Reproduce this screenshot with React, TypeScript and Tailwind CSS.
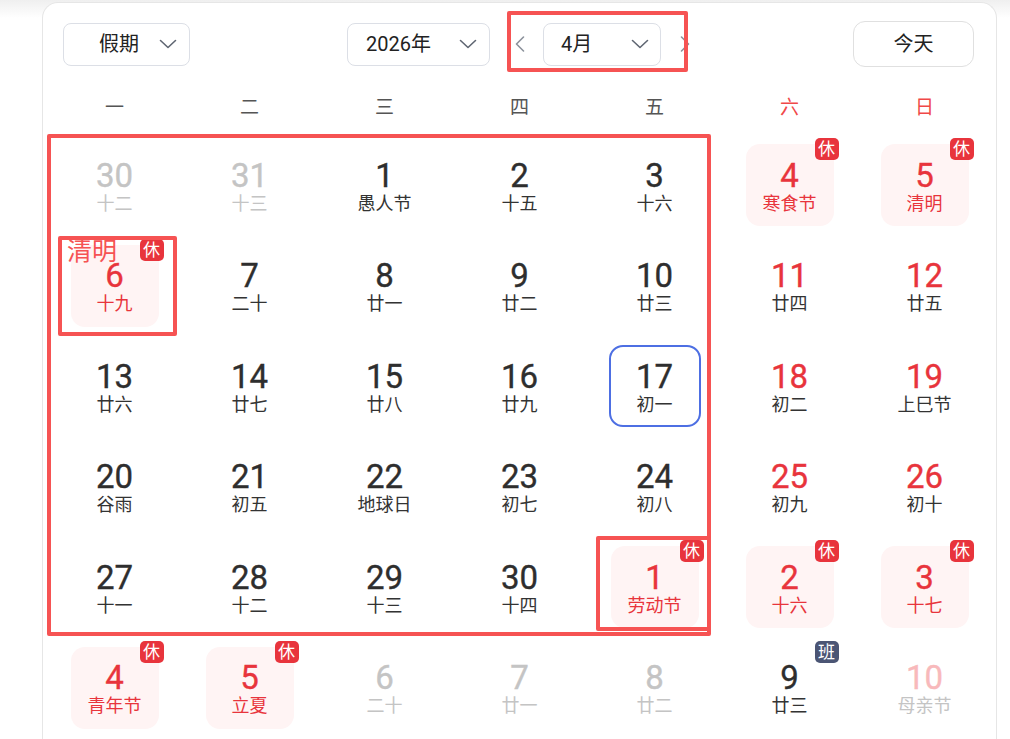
import React from 'react'

type Kind = 'other' | 'normal' | 'weekend' | 'holiday' | 'work' | 'faded'

interface Day {
  d: number
  l: string
  k: Kind
  selected?: boolean
}

const weekdays = ['一', '二', '三', '四', '五', '六', '日']

// 2026年4月，周一开始
const days: Day[] = [
  { d: 30, l: '十二', k: 'other' },
  { d: 31, l: '十三', k: 'other' },
  { d: 1, l: '愚人节', k: 'normal' },
  { d: 2, l: '十五', k: 'normal' },
  { d: 3, l: '十六', k: 'normal' },
  { d: 4, l: '寒食节', k: 'holiday' },
  { d: 5, l: '清明', k: 'holiday' },

  { d: 6, l: '十九', k: 'holiday' },
  { d: 7, l: '二十', k: 'normal' },
  { d: 8, l: '廿一', k: 'normal' },
  { d: 9, l: '廿二', k: 'normal' },
  { d: 10, l: '廿三', k: 'normal' },
  { d: 11, l: '廿四', k: 'weekend' },
  { d: 12, l: '廿五', k: 'weekend' },

  { d: 13, l: '廿六', k: 'normal' },
  { d: 14, l: '廿七', k: 'normal' },
  { d: 15, l: '廿八', k: 'normal' },
  { d: 16, l: '廿九', k: 'normal' },
  { d: 17, l: '初一', k: 'normal', selected: true },
  { d: 18, l: '初二', k: 'weekend' },
  { d: 19, l: '上巳节', k: 'weekend' },

  { d: 20, l: '谷雨', k: 'normal' },
  { d: 21, l: '初五', k: 'normal' },
  { d: 22, l: '地球日', k: 'normal' },
  { d: 23, l: '初七', k: 'normal' },
  { d: 24, l: '初八', k: 'normal' },
  { d: 25, l: '初九', k: 'weekend' },
  { d: 26, l: '初十', k: 'weekend' },

  { d: 27, l: '十一', k: 'normal' },
  { d: 28, l: '十二', k: 'normal' },
  { d: 29, l: '十三', k: 'normal' },
  { d: 30, l: '十四', k: 'normal' },
  { d: 1, l: '劳动节', k: 'holiday' },
  { d: 2, l: '十六', k: 'holiday' },
  { d: 3, l: '十七', k: 'holiday' },

  { d: 4, l: '青年节', k: 'holiday' },
  { d: 5, l: '立夏', k: 'holiday' },
  { d: 6, l: '二十', k: 'other' },
  { d: 7, l: '廿一', k: 'other' },
  { d: 8, l: '廿二', k: 'other' },
  { d: 9, l: '廿三', k: 'work' },
  { d: 10, l: '母亲节', k: 'faded' },
]

const numColor: Record<Kind, string> = {
  other: 'text-[#c4c4c4]',
  normal: 'text-[#2e2e2e]',
  weekend: 'text-[#e8343c]',
  holiday: 'text-[#e8343c]',
  work: 'text-[#2e2e2e]',
  faded: 'text-[#f8b9bb]',
}

const lunarColor: Record<Kind, string> = {
  other: 'text-[#c4c4c4]',
  normal: 'text-[#333333]',
  weekend: 'text-[#333333]',
  holiday: 'text-[#e8343c]',
  work: 'text-[#333333]',
  faded: 'text-[#c4c4c4]',
}

function Chevron() {
  return (
    <svg width="18" height="10" viewBox="0 0 18 10" fill="none">
      <polyline points="1.5,1.5 9,8.5 16.5,1.5" stroke="#5f6672" strokeWidth="1.6" strokeLinecap="round" strokeLinejoin="round" />
    </svg>
  )
}

function Arrow({ dir }: { dir: 'left' | 'right' }) {
  return (
    <button type="button" className="flex w-[20px] items-center justify-center">
      <svg width="10" height="16" viewBox="0 0 10 16" fill="none">
        <polyline
          points={dir === 'left' ? '8.5,1 1.5,8 8.5,15' : '1.5,1 8.5,8 1.5,15'}
          stroke="#8c929c"
          strokeWidth="1.6"
          strokeLinecap="round"
          strokeLinejoin="round"
        />
      </svg>
    </button>
  )
}

function Dropdown({ label, className }: { label: string; className: string }) {
  return (
    <button
      type="button"
      className={`flex h-[43px] items-center justify-between rounded-[8px] border border-[#dcdfe6] bg-white text-[20px] text-[#222] ${className}`}
    >
      <span>{label}</span>
      <Chevron />
    </button>
  )
}

function DayCell({ day }: { day: Day }) {
  const box = day.selected
    ? 'w-[92px] border-2 border-[#4d6fe3]'
    : day.k === 'holiday'
      ? 'w-[88px] bg-[#fff4f4]'
      : 'w-[88px]'
  return (
    <div className="flex h-[100.5px] items-center justify-center">
      <div className={`relative flex h-[82px] flex-col items-center justify-center rounded-[14px] pt-[5px] ${box}`}>
        <span className={`text-[33px] font-normal leading-[32px] [-webkit-text-stroke:0.35px_currentColor] ${numColor[day.k]}`}>
          {day.d}
        </span>
        <span className={`text-[18px] leading-[24px] ${lunarColor[day.k]}`}>{day.l}</span>
        {(day.k === 'holiday' || day.k === 'work') && (
          <span
            className={`absolute -right-[5px] -top-[6px] h-[22px] w-[24px] rounded-[5px] text-center text-[17px] leading-[22px] text-white ${
              day.k === 'holiday' ? 'bg-[#e8343c]' : 'bg-[#4b5574]'
            }`}
          >
            {day.k === 'holiday' ? '休' : '班'}
          </span>
        )}
      </div>
    </div>
  )
}

export default function App() {
  return (
    <div className="relative h-[739px] w-[1010px] overflow-hidden bg-[linear-gradient(to_bottom,#efefef,#ffffff_18px)] font-['Roboto','Noto_Sans_CJK_SC',sans-serif]">
      <div className="ml-[42px] mt-[2px] w-[955px] rounded-t-[16px] border border-b-0 border-[#e6e6e6] bg-white px-[4px] pb-10">
        {/* 顶部选择栏 */}
        <div className="grid grid-cols-[1fr_auto_1fr] items-center pt-[18px]">
          <div className="pl-[16px]">
            <Dropdown label="假期" className="w-[127px] pl-[35px] pr-[12px]" />
          </div>
          <div className="ml-[3px] flex items-center">
            <Dropdown label="2026年" className="w-[143px] pl-[18px] pr-[12px]" />
            <div className="ml-[20px]">
              <Arrow dir="left" />
            </div>
            <Dropdown label="4月" className="ml-[13px] w-[118px] pl-[17px] pr-[11px]" />
            <div className="ml-[14px]">
              <Arrow dir="right" />
            </div>
          </div>
          <div className="flex justify-end pr-[18px]">
            <button
              type="button"
              className="h-[46px] w-[121px] rounded-[12px] border border-[#e0e0e0] bg-white text-[20px] text-[#222]"
            >
              今天
            </button>
          </div>
        </div>

        {/* 星期 */}
        <div className="grid h-[68px] grid-cols-7 items-center pt-[15px]">
          {weekdays.map((w, i) => (
            <div key={w} className={`text-center text-[19px] ${i >= 5 ? 'text-[#f04848]' : 'text-[#555]'}`}>
              {w}
            </div>
          ))}
        </div>

        {/* 日期 */}
        <div className="grid grid-cols-7">
          {days.map((day, i) => (
            <DayCell key={i} day={day} />
          ))}
        </div>
      </div>

      {/* 标注框 */}
      <div className="pointer-events-none absolute left-[507px] top-[11px] h-[61px] w-[181px] rounded-[2px] border-4 border-[#f65353]" />
      <div className="pointer-events-none absolute left-[47px] top-[134px] h-[502px] w-[664px] rounded-[2px] border-4 border-[#f65353]" />
      <div className="pointer-events-none absolute left-[58px] top-[236px] h-[100px] w-[119px] rounded-[2px] border-4 border-[#f65353]" />
      <div className="pointer-events-none absolute left-[596px] top-[536px] h-[95px] w-[115px] rounded-[2px] border-4 border-[#f65353]" />
      <div className="pointer-events-none absolute left-[67px] top-[237px] text-[25px] leading-[30px] text-[#f65353]">清明</div>
    </div>
  )
}
